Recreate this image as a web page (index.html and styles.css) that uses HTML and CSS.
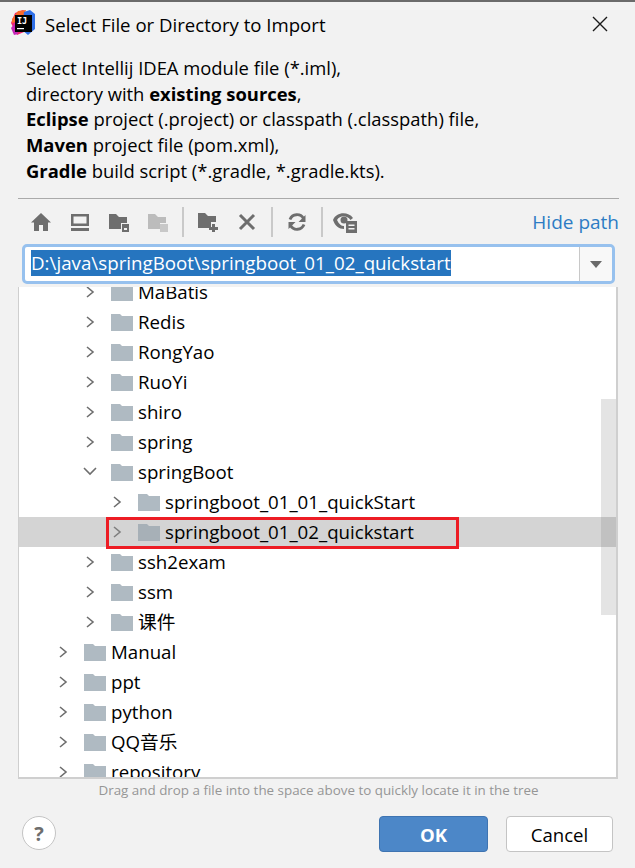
FILE: index.html
```html
<!DOCTYPE html>
<html lang="en">
<head>
<meta charset="utf-8">
<title>Select File or Directory to Import</title>
<link rel="stylesheet" href="styles.css">
</head>
<body>
<div class="dialog">
  <header class="titlebar">
    <svg class="logo" width="26" height="26" viewBox="0 0 26 26">
      <path d="M5 3 L13 0 L18 4 L14 22 L7 25 L1 13 Z" fill="#f0266e"/>
      <path d="M2 9 L8 1 L16 0 L12 10 L2 13 Z" fill="#fa6a2d"/>
      <path d="M14 2 L20 0 L25 4 L25 19 L18 25 L12 20 Z" fill="#2f6fe8"/>
      <path d="M1 18 L5 13 L8 24 L4 25 Z" fill="#c428b8"/>
      <rect x="5" y="5" width="17" height="17" fill="#000"/>
      <text x="7" y="13.5" class="logo-text">IJ</text>
      <rect x="7" y="18" width="7" height="1.2" fill="#fff"/>
    </svg>
    <span class="title">Select File or Directory to Import</span>
    <svg class="close" width="16" height="16" viewBox="0 0 16 16"><path d="M1 1 L15 15 M15 1 L1 15" stroke="#1a1a1a" stroke-width="1.4" fill="none"/></svg>
  </header>

  <div class="desc">
    <p>Select Intellij IDEA module file (*.iml),</p>
    <p>directory with <b>existing sources</b>,</p>
    <p><b>Eclipse</b> project (.project) or classpath (.classpath) file,</p>
    <p><b>Maven</b> project file (pom.xml),</p>
    <p><b>Gradle</b> build script (*.gradle, *.gradle.kts).</p>
  </div>

  <div class="toolbar">
    <svg class="tool" viewBox="0 0 20 20"><path d="M10 1 L20 10.5 L17 10.5 L17 19 L12 19 L12 13 L8 13 L8 19 L3 19 L3 10.5 L0 10.5 Z" fill="#6e6e6e"/></svg>
    <svg class="tool" viewBox="0 0 20 20"><path d="M1 2 H19 V14 H1 Z M3.500 4.500 V11.500 H16.500 V4.500 Z M1 16 H19 V19 H1 Z" fill="#6e6e6e" fill-rule="evenodd"/></svg>
    <svg class="tool" viewBox="0 0 20 20"><path d="M0 2 H7 L10 5 H18 V11 H12 V17 H0 Z" fill="#6e6e6e"/><path d="M13 12 H20 V20 H13 Z M15 16 V18 H18 V16 Z" fill="#6e6e6e" fill-rule="evenodd"/></svg>
    <svg class="tool" viewBox="0 0 20 20"><path d="M0 2 H7 L10 5 H18 V11 H12 V17 H0 Z" fill="#bcbcbc"/><rect x="12" y="12" width="8" height="8" fill="#c8c8c8"/></svg>
    <span class="sep"></span>
    <svg class="tool" viewBox="0 0 20 20"><path d="M0 1 H7 L10 4 H18 V10 H13 V16 H0 Z" fill="#6e6e6e"/><path d="M14 12 H17 V15 H20 V18 H17 V20 H14 V18 H11 V15 H14 Z" fill="#6e6e6e"/></svg>
    <svg class="tool" viewBox="0 0 20 20"><path d="M3 3 L17 17 M17 3 L3 17" stroke="#6e6e6e" stroke-width="3" fill="none"/></svg>
    <span class="sep"></span>
    <svg class="tool" viewBox="0 0 20 20"><path d="M16.500 6.500 A7.500 7.500 0 0 0 3 7.500 M3.500 13.500 A7.500 7.500 0 0 0 17 12.500" stroke="#6e6e6e" stroke-width="2.800" fill="none"/><path d="M18.500 3 V10 H11.500 Z M1.500 17 V10 H8.500 Z" fill="#6e6e6e"/></svg>
    <span class="sep"></span>
    <svg class="tool eye" viewBox="0 0 24 22"><path d="M0 9 C3 1 15 0 20 7 L17.500 9 C14 4 7 4 4 9 C6 13 8 15 11 15 V18 C6 18 2 15 0 9 Z" fill="#6e6e6e"/><circle cx="11" cy="9" r="3.500" fill="#6e6e6e"/><path d="M13 10 H24 V22 H13 Z M15.500 13.500 V15 H21.500 V13.500 Z M15.500 17 V18.500 H21.500 V17 Z" fill="#6e6e6e" fill-rule="evenodd"/></svg>
    <a class="hide-path">Hide path</a>
  </div>

  <div class="combo">
    <div class="combo-input"><span class="combo-text">D:\java\springBoot\springboot_01_02_quickstart</span></div>
    <div class="combo-btn"><span class="caret"></span></div>
  </div>

  <div class="tree">
    <div class="rows">
      <div class="row d1"><svg class="chev" viewBox="0 0 10 14"><path d="M2 2 L8 7 L2 12"/></svg><svg class="folder" viewBox="0 0 22 18"><path d="M0 1 H9 L11 3 H22 V18 H0 Z"/></svg><span>MaBatis</span></div>
      <div class="row d1"><svg class="chev" viewBox="0 0 10 14"><path d="M2 2 L8 7 L2 12"/></svg><svg class="folder" viewBox="0 0 22 18"><path d="M0 1 H9 L11 3 H22 V18 H0 Z"/></svg><span>Redis</span></div>
      <div class="row d1"><svg class="chev" viewBox="0 0 10 14"><path d="M2 2 L8 7 L2 12"/></svg><svg class="folder" viewBox="0 0 22 18"><path d="M0 1 H9 L11 3 H22 V18 H0 Z"/></svg><span>RongYao</span></div>
      <div class="row d1"><svg class="chev" viewBox="0 0 10 14"><path d="M2 2 L8 7 L2 12"/></svg><svg class="folder" viewBox="0 0 22 18"><path d="M0 1 H9 L11 3 H22 V18 H0 Z"/></svg><span>RuoYi</span></div>
      <div class="row d1"><svg class="chev" viewBox="0 0 10 14"><path d="M2 2 L8 7 L2 12"/></svg><svg class="folder" viewBox="0 0 22 18"><path d="M0 1 H9 L11 3 H22 V18 H0 Z"/></svg><span>shiro</span></div>
      <div class="row d1"><svg class="chev" viewBox="0 0 10 14"><path d="M2 2 L8 7 L2 12"/></svg><svg class="folder" viewBox="0 0 22 18"><path d="M0 1 H9 L11 3 H22 V18 H0 Z"/></svg><span>spring</span></div>
      <div class="row d1"><svg class="chev" viewBox="0 0 10 14"><path d="M-1 3 L5 9 L11 3"/></svg><svg class="folder" viewBox="0 0 22 18"><path d="M0 1 H9 L11 3 H22 V18 H0 Z"/></svg><span>springBoot</span></div>
      <div class="row d2"><svg class="chev" viewBox="0 0 10 14"><path d="M2 2 L8 7 L2 12"/></svg><svg class="folder" viewBox="0 0 22 18"><path d="M0 1 H9 L11 3 H22 V18 H0 Z"/></svg><span>springboot_01_01_quickStart</span></div>
      <div class="row d2 selected"><svg class="chev" viewBox="0 0 10 14"><path d="M2 2 L8 7 L2 12"/></svg><svg class="folder" viewBox="0 0 22 18"><path d="M0 1 H9 L11 3 H22 V18 H0 Z"/></svg><span>springboot_01_02_quickstart</span></div>
      <div class="row d1"><svg class="chev" viewBox="0 0 10 14"><path d="M2 2 L8 7 L2 12"/></svg><svg class="folder" viewBox="0 0 22 18"><path d="M0 1 H9 L11 3 H22 V18 H0 Z"/></svg><span>ssh2exam</span></div>
      <div class="row d1"><svg class="chev" viewBox="0 0 10 14"><path d="M2 2 L8 7 L2 12"/></svg><svg class="folder" viewBox="0 0 22 18"><path d="M0 1 H9 L11 3 H22 V18 H0 Z"/></svg><span>ssm</span></div>
      <div class="row d1"><svg class="chev" viewBox="0 0 10 14"><path d="M2 2 L8 7 L2 12"/></svg><svg class="folder" viewBox="0 0 22 18"><path d="M0 1 H9 L11 3 H22 V18 H0 Z"/></svg><span>课件</span></div>
      <div class="row d0"><svg class="chev" viewBox="0 0 10 14"><path d="M2 2 L8 7 L2 12"/></svg><svg class="folder" viewBox="0 0 22 18"><path d="M0 1 H9 L11 3 H22 V18 H0 Z"/></svg><span>Manual</span></div>
      <div class="row d0"><svg class="chev" viewBox="0 0 10 14"><path d="M2 2 L8 7 L2 12"/></svg><svg class="folder" viewBox="0 0 22 18"><path d="M0 1 H9 L11 3 H22 V18 H0 Z"/></svg><span>ppt</span></div>
      <div class="row d0"><svg class="chev" viewBox="0 0 10 14"><path d="M2 2 L8 7 L2 12"/></svg><svg class="folder" viewBox="0 0 22 18"><path d="M0 1 H9 L11 3 H22 V18 H0 Z"/></svg><span>python</span></div>
      <div class="row d0"><svg class="chev" viewBox="0 0 10 14"><path d="M2 2 L8 7 L2 12"/></svg><svg class="folder" viewBox="0 0 22 18"><path d="M0 1 H9 L11 3 H22 V18 H0 Z"/></svg><span>QQ音乐</span></div>
      <div class="row d0"><svg class="chev" viewBox="0 0 10 14"><path d="M2 2 L8 7 L2 12"/></svg><svg class="folder" viewBox="0 0 22 18"><path d="M0 1 H9 L11 3 H22 V18 H0 Z"/></svg><span>repository</span></div>
    </div>
    <div class="scrollbar"></div>
    <div class="highlight"></div>
  </div>

  <div class="hint">Drag and drop a file into the space above to quickly locate it in the tree</div>

  <footer class="footer">
    <div class="help">?</div>
    <div class="btn primary">OK</div>
    <div class="btn secondary">Cancel</div>
  </footer>
</div>
</body>
</html>
```
FILE: styles.css
```css
* { box-sizing: border-box; }
html, body { margin: 0; padding: 0; }
body {
  width: 635px;
  height: 868px;
  overflow: hidden;
  background: #f2f2f2;
  color: #000;
  font-family: "Open Sans", "Noto Sans CJK SC", sans-serif;
}
.dialog { height: 868px; border-top: 2px solid #6b6b6b; display: flex; flex-direction: column; }

.titlebar { height: 44px; display: flex; align-items: center; padding: 0 27px 0 10px; flex: none; }
.logo { flex: none; margin: -3px 9px 0 0; }
.logo-text { font: bold 8.5px "DejaVu Sans Mono", monospace; fill: #fff; }
.title { font-size: 18.6px; flex: 1; }
.close { flex: none; }

.desc { padding: 9px 0 0 26px; height: 152px; font-size: 18.4px; line-height: 25.7px; flex: none; }
.desc p { margin: 0; white-space: nowrap; }
.desc b { font-weight: 700; }

.toolbar {
  margin: 0 16px 0 18px;
  height: 46px;
  border-top: 1px solid #aaaaaa;
  display: flex;
  align-items: center;
  gap: 19px;
  padding: 0 0 0 13px;
  flex: none;
}
.tool { width: 20px; height: 20px; flex: none; }
.tool.eye { width: 24px; height: 22px; margin-left: -4px; }
.sep { width: 2px; height: 30px; background: #c9c9c9; margin: 0 -5px 0 -5px; flex: none; }
.hide-path { margin-left: auto; font-size: 19px; color: #2d7cc4; }

.combo {
  margin: 0 20px 0 22px;
  height: 40px;
  flex: none;
  display: flex;
  border: 3px solid #97c1ee;
  border-radius: 5px;
  background: #fff;
}
.combo-input { flex: 1; padding: 3px 0 0 6px; font-size: 18.75px; line-height: 26px; border-right: 1px solid #c8c8c8; white-space: nowrap; overflow: hidden; }
.combo-text { display: inline-block; background: #2675bf; color: #fff; height: 26px; }
.combo-btn { width: 32px; flex: none; background: #f8f8f8; display: flex; align-items: center; justify-content: center; border-radius: 0 3px 3px 0; }
.caret { width: 0; height: 0; border-left: 6.500px solid transparent; border-right: 6.500px solid transparent; border-top: 7px solid #6a6a6a; }

.tree {
  position: relative;
  margin: 3px 17px 0 18px;
  height: 492px;
  flex: none;
  background: #fff;
  border: 1px solid #cfcfcf;
  border-width: 0 2px 2px 1px;
  overflow: hidden;
}
.rows { margin-top: -10px; }
.row { height: 30px; display: flex; align-items: center; font-size: 18.7px; line-height: 30px; white-space: nowrap; }
.row.d0 { padding-left: 39px; }
.row.d1 { padding-left: 66px; }
.row.d2 { padding-left: 93px; }
.row.selected { background: #d4d4d4; }
.chev { width: 10px; height: 14px; flex: none; margin-right: 16px; overflow: visible; }
.chev path { stroke: #6e6e6e; stroke-width: 1.600; fill: none; }
.folder { width: 22px; height: 18px; flex: none; margin-right: 5px; }
.folder path { fill: #afbac2; }
.selected .folder path { fill: #a7b0b7; }
.selected .chev path { stroke: #7f7f7f; }

.scrollbar { position: absolute; top: 112px; right: 0; width: 15px; height: 216px; background: rgba(120, 120, 120, 0.2); }
.highlight { position: absolute; top: 230px; left: 87px; width: 353px; height: 32px; border: 3px solid #ed1c24; }

.hint { flex: none; height: 22px; font-size: 13.4px; line-height: 22px; color: #969696; text-align: center; padding-left: 2px; white-space: nowrap; }
.footer { flex: 1; display: flex; align-items: flex-start; padding: 15px 22px 0 22px; }
.help {
  width: 34px; height: 34px; border-radius: 50%;
  background: #fff; border: 1px solid #c4c4c4;
  color: #6e6e6e; font-size: 20px; font-weight: 700;
  display: flex; align-items: center; justify-content: center;
}
.btn {
  height: 36px;
  background: #fff; border: 1px solid #c4c4c4; border-radius: 4px;
  font-size: 18.6px; display: flex; align-items: center; justify-content: center;
}
.btn.primary { width: 109px; margin-left: auto; background: #4c87c8; border-color: #3f74b1; color: #fff; font-weight: 700; }
.btn.secondary { width: 107px; margin-left: 18px; }
```
